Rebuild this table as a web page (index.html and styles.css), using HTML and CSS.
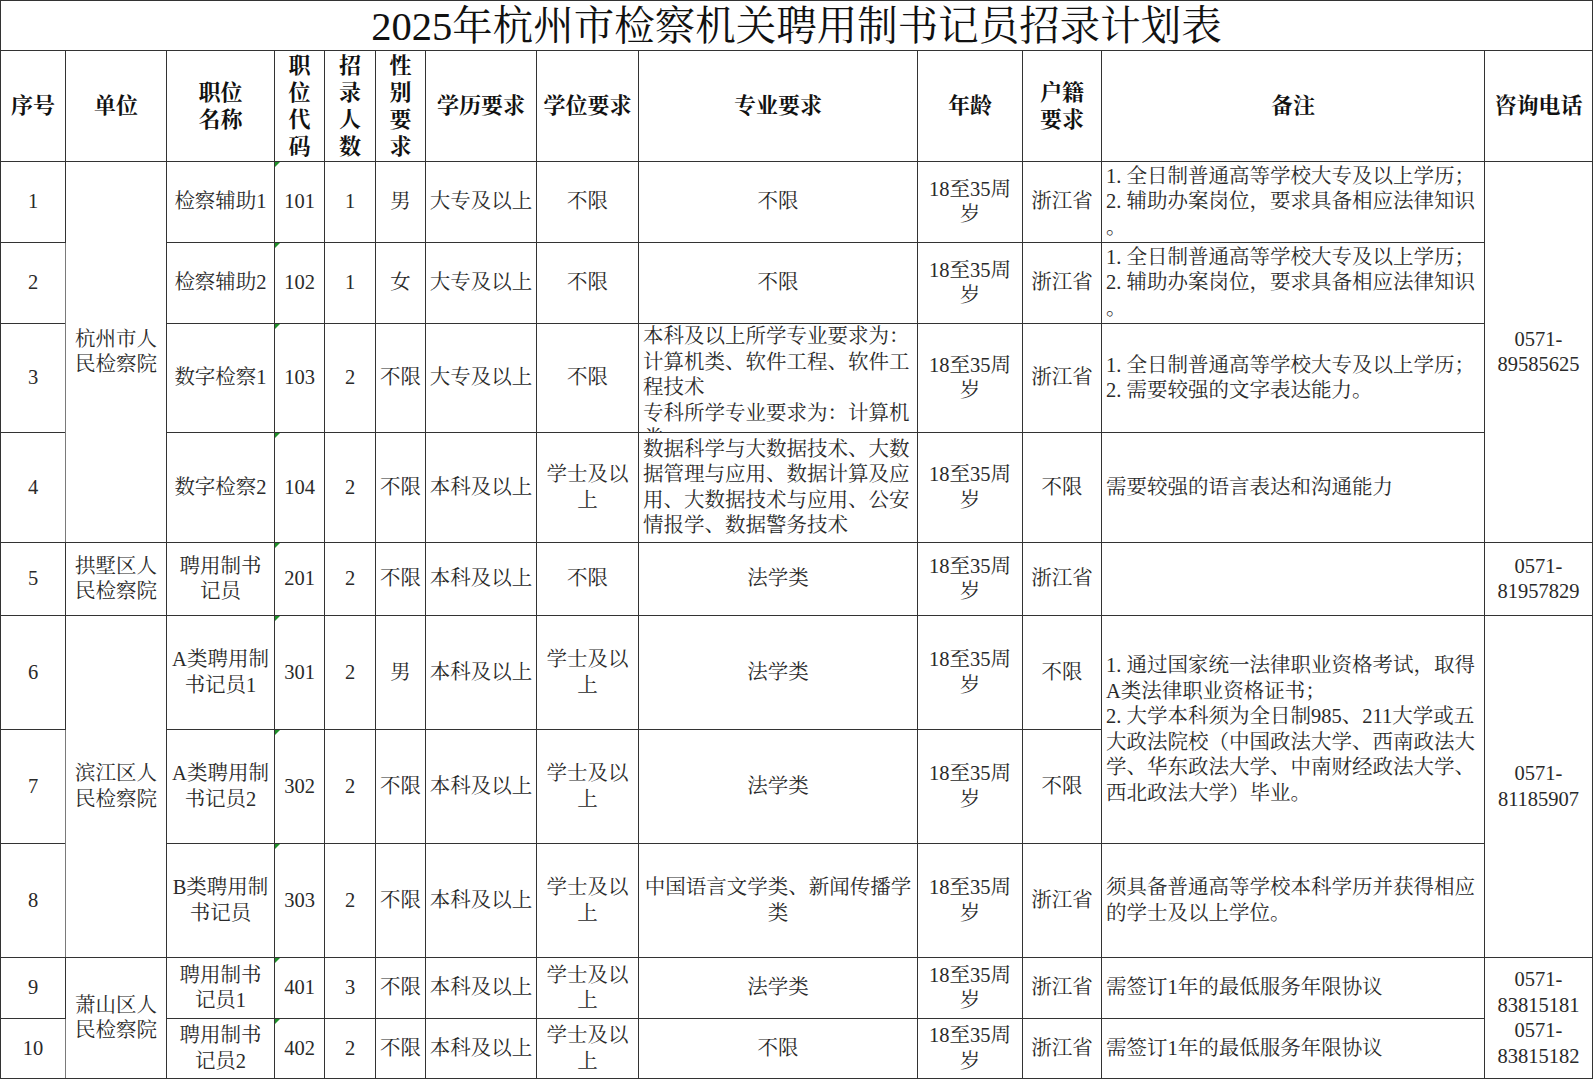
FILE: index.html
```html
<!DOCTYPE html>
<html lang="zh-CN">
<head>
<meta charset="utf-8">
<title>2025年杭州市检察机关聘用制书记员招录计划表</title>
<link rel="stylesheet" href="styles.css">
</head>
<body>
<table class="plan">
  <colgroup>
    <col class="c-no"><col class="c-unit"><col class="c-name"><col class="c-code"><col class="c-num"><col class="c-sex">
    <col class="c-edu"><col class="c-deg"><col class="c-major"><col class="c-age"><col class="c-hukou"><col class="c-note"><col class="c-tel">
  </colgroup>
  <tr class="r-title"><td colspan="13" class="title">2025年杭州市检察机关聘用制书记员招录计划表</td></tr>
  <tr class="r-head">
    <th>序号</th><th class="g">单位</th><th class="g">职位<br>名称</th><th>职<br>位<br>代<br>码</th><th class="g">招<br>录<br>人<br>数</th><th class="g">性<br>别<br>要<br>求</th>
    <th>学历要求</th><th>学位要求</th><th>专业要求</th><th>年龄</th><th>户籍<br>要求</th><th>备注</th><th>咨询电话</th>
  </tr>
  <tr class="r1">
    <td>1</td><td rowspan="4" class="g">杭州市人<br>民检察院</td><td class="g">检察辅助1</td><td class="code">101</td><td class="g">1</td><td class="g">男</td>
    <td>大专及以上</td><td>不限</td><td>不限</td><td>18至35周<br>岁</td><td>浙江省</td>
    <td class="left">1. 全日制普通高等学校大专及以上学历；<br>2. 辅助办案岗位，要求具备相应法律知识<br>。</td>
    <td rowspan="4">0571-<br>89585625</td>
  </tr>
  <tr class="r2">
    <td>2</td><td class="g">检察辅助2</td><td class="code">102</td><td class="g">1</td><td class="g">女</td>
    <td>大专及以上</td><td>不限</td><td>不限</td><td>18至35周<br>岁</td><td>浙江省</td>
    <td class="left">1. 全日制普通高等学校大专及以上学历；<br>2. 辅助办案岗位，要求具备相应法律知识<br>。</td>
  </tr>
  <tr class="r3">
    <td>3</td><td class="g">数字检察1</td><td class="code">103</td><td class="g">2</td><td class="g">不限</td>
    <td>大专及以上</td><td>不限</td>
    <td class="left clip"><div class="clipbox">本科及以上所学专业要求为：<br>计算机类、软件工程、软件工<br>程技术<br>专科所学专业要求为：计算机<br>类</div></td>
    <td>18至35周<br>岁</td><td>浙江省</td>
    <td class="left">1. 全日制普通高等学校大专及以上学历；<br>2. 需要较强的文字表达能力。</td>
  </tr>
  <tr class="r4">
    <td>4</td><td class="g">数字检察2</td><td class="code">104</td><td class="g">2</td><td class="g">不限</td>
    <td>本科及以上</td><td>学士及以<br>上</td>
    <td class="left">数据科学与大数据技术、大数<br>据管理与应用、数据计算及应<br>用、大数据技术与应用、公安<br>情报学、数据警务技术</td>
    <td>18至35周<br>岁</td><td>不限</td>
    <td class="left">需要较强的语言表达和沟通能力</td>
  </tr>
  <tr class="r5">
    <td>5</td><td class="g">拱墅区人<br>民检察院</td><td class="g">聘用制书<br>记员</td><td class="code">201</td><td class="g">2</td><td class="g">不限</td>
    <td>本科及以上</td><td>不限</td><td>法学类</td><td>18至35周<br>岁</td><td>浙江省</td>
    <td class="left"></td>
    <td>0571-<br>81957829</td>
  </tr>
  <tr class="r6">
    <td>6</td><td rowspan="3" class="g">滨江区人<br>民检察院</td><td class="g">A类聘用制<br>书记员1</td><td class="code">301</td><td class="g">2</td><td class="g">男</td>
    <td>本科及以上</td><td>学士及以<br>上</td><td>法学类</td><td>18至35周<br>岁</td><td>不限</td>
    <td class="left" rowspan="2">1. 通过国家统一法律职业资格考试，取得<br>A类法律职业资格证书；<br>2. 大学本科须为全日制985、211大学或五<br>大政法院校（中国政法大学、西南政法大<br>学、华东政法大学、中南财经政法大学、<br>西北政法大学）毕业。</td>
    <td rowspan="3">0571-<br>81185907</td>
  </tr>
  <tr class="r7">
    <td>7</td><td class="g">A类聘用制<br>书记员2</td><td class="code">302</td><td class="g">2</td><td class="g">不限</td>
    <td>本科及以上</td><td>学士及以<br>上</td><td>法学类</td><td>18至35周<br>岁</td><td>不限</td>
  </tr>
  <tr class="r8">
    <td>8</td><td class="g">B类聘用制<br>书记员</td><td class="code">303</td><td class="g">2</td><td class="g">不限</td>
    <td>本科及以上</td><td>学士及以<br>上</td><td>中国语言文学类、新闻传播学<br>类</td><td>18至35周<br>岁</td><td>浙江省</td>
    <td class="left">须具备普通高等学校本科学历并获得相应<br>的学士及以上学位。</td>
  </tr>
  <tr class="r9">
    <td>9</td><td rowspan="2" class="g">萧山区人<br>民检察院</td><td class="g">聘用制书<br>记员1</td><td class="code">401</td><td class="g">3</td><td class="g">不限</td>
    <td>本科及以上</td><td>学士及以<br>上</td><td>法学类</td><td>18至35周<br>岁</td><td>浙江省</td>
    <td class="left">需签订1年的最低服务年限协议</td>
    <td rowspan="2">0571-<br>83815181<br>0571-<br>83815182</td>
  </tr>
  <tr class="r10">
    <td>10</td><td class="g">聘用制书<br>记员2</td><td class="code">402</td><td class="g">2</td><td class="g">不限</td>
    <td>本科及以上</td><td>学士及以<br>上</td><td>不限</td><td>18至35周<br>岁</td><td>浙江省</td>
    <td class="left">需签订1年的最低服务年限协议</td>
  </tr>
</table>
</body>
</html>
```

FILE: styles.css
```css
html, body {
  margin: 0;
  padding: 0;
  background: #ffffff;
}

.plan {
  border-collapse: collapse;
  table-layout: fixed;
  width: 1592px;
  font-family: "Liberation Serif", "Noto Serif CJK SC", "Noto Sans CJK SC", serif;
  color: #2a2a2a;
}

.c-no { width: 65px; }
.c-unit { width: 101px; }
.c-name { width: 108px; }
.c-code { width: 50px; }
.c-num { width: 51px; }
.c-sex { width: 50px; }
.c-edu { width: 111px; }
.c-deg { width: 102px; }
.c-major { width: 279px; }
.c-age { width: 105px; }
.c-hukou { width: 79px; }
.c-note { width: 383px; }
.c-tel { width: 108px; }

.plan td,
.plan th {
  border: 1px solid #333333;
  padding: 0 3px;
  text-align: center;
  vertical-align: middle;
  font-size: 20.5px;
  line-height: 25.5px;
  font-weight: normal;
  white-space: nowrap;
  overflow: hidden;
}

.plan td.g,
.plan th.g {
  border-left-color: #7a7a7a;
}

.plan th {
  font-size: 22px;
  line-height: 27.25px;
  font-weight: bold;
  color: #111111;
}

.plan td.title {
  font-size: 40.5px;
  line-height: 46px;
  padding: 3px 0 0;
  color: #111111;
}

.plan td.left {
  text-align: left;
  padding-left: 4px;
}

.plan td.clip {
  vertical-align: top;
}

.clipbox {
  height: 108px;
  overflow: hidden;
}

.plan td.code {
  position: relative;
}

.plan td.code::before {
  content: "";
  position: absolute;
  left: 0;
  top: 0;
  width: 0;
  height: 0;
  border-top: 5px solid #1f8f2a;
  border-right: 5px solid transparent;
}

.r-title { height: 50px; }
.r-head { height: 111px; }
.r1 { height: 81px; }
.r2 { height: 81px; }
.r3 { height: 109px; }
.r4 { height: 110px; }
.r5 { height: 73px; }
.r6 { height: 114px; }
.r7 { height: 114px; }
.r8 { height: 114px; }
.r9 { height: 61px; }
.r10 { height: 60px; }
```
